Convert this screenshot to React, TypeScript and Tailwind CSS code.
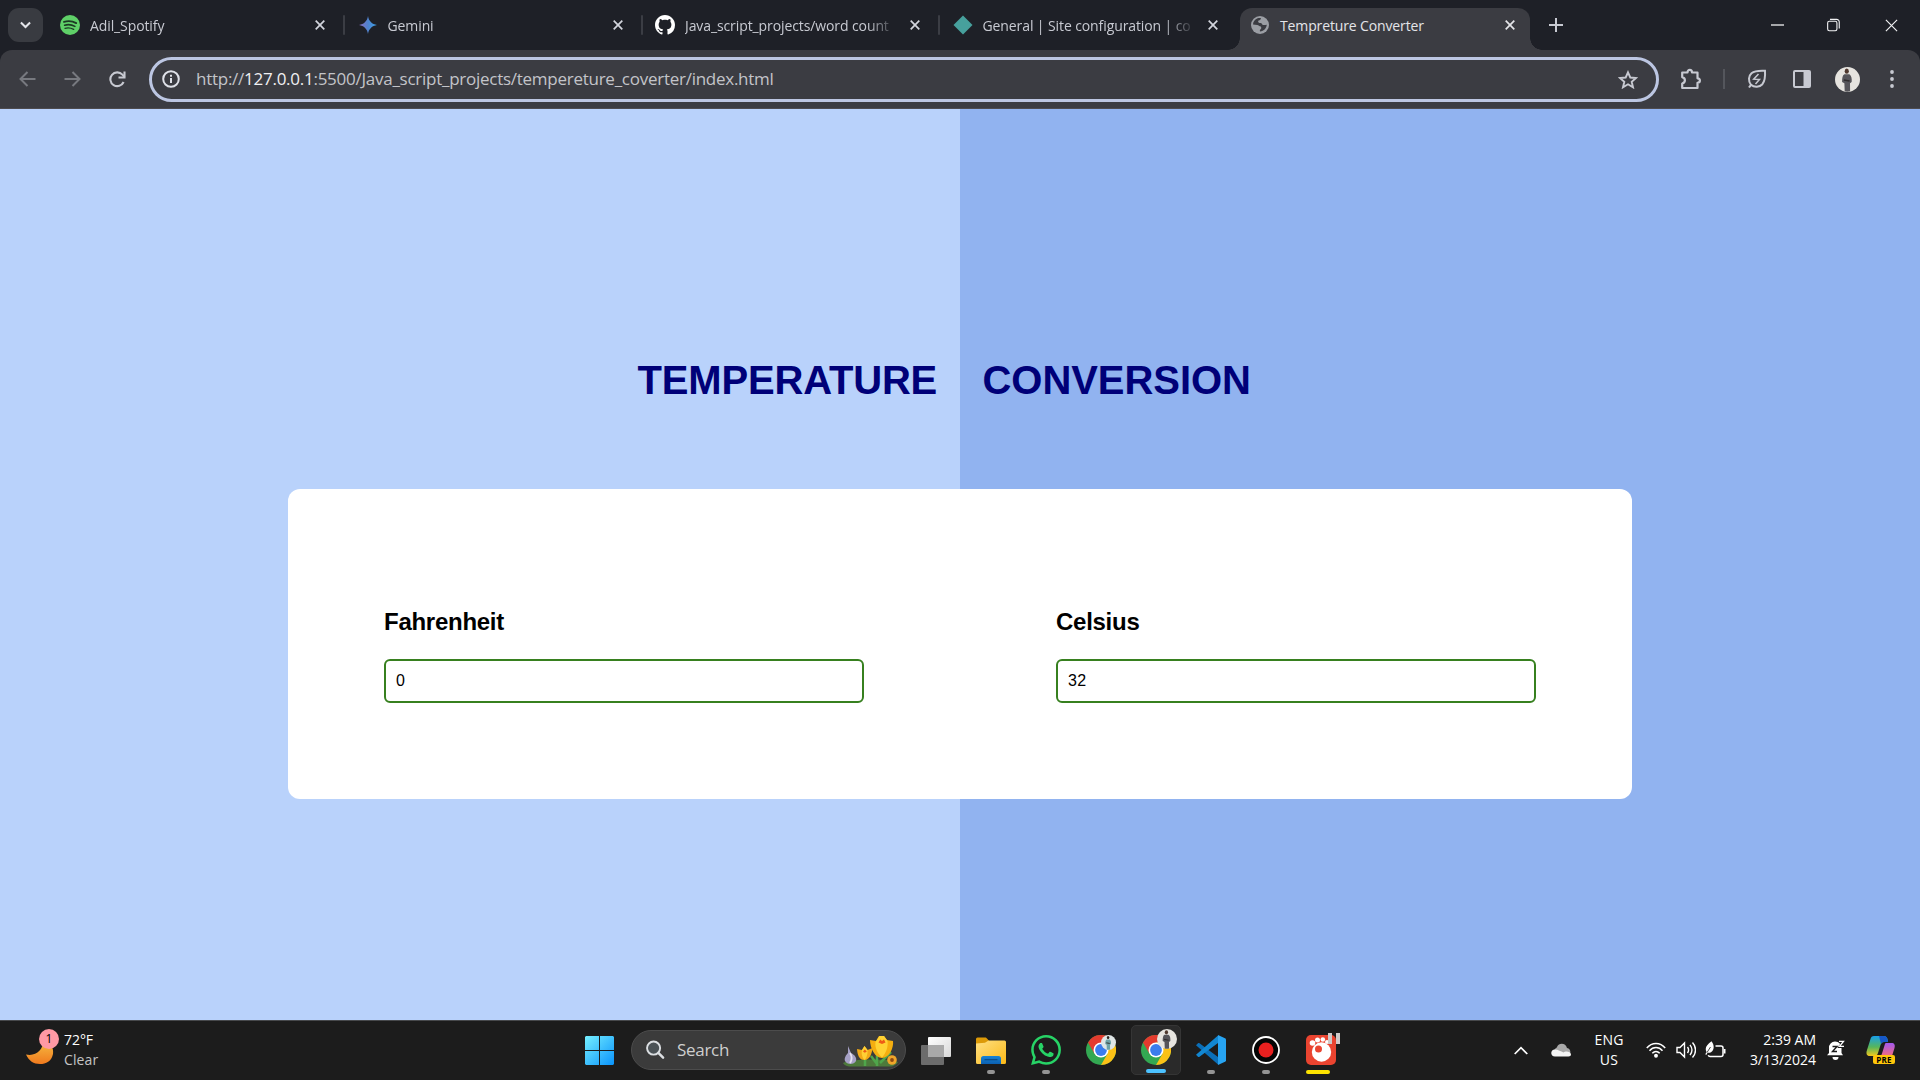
import React from "react";

const ui = "font-['Open_Sans','Noto_Sans',sans-serif]";

function X({ size = 10, w = 1.7 }: { size?: number; w?: number }) {
  return (
    <svg width={size} height={size} viewBox="0 0 10 10" fill="none" stroke="currentColor" strokeWidth={w} className="shrink-0">
      <path d="M.7.7 9.3 9.3M9.3.7.7 9.3" />
    </svg>
  );
}

const Spotify = () => (
  <svg width="20" height="20" viewBox="0 0 20 20">
    <circle cx="10" cy="10" r="10" fill="#5fd068" />
    <g fill="none" stroke="#1d3a24" strokeLinecap="round">
      <path d="M4 6.9c4-1.2 8.600-.8 12.200 1.200" strokeWidth="1.900" />
      <path d="M4.600 10.200c3.400-1 7.200-.6 10.300 1.200" strokeWidth="1.600" />
      <path d="M5 13.300c3-.8 6-.4 8.700 1.100" strokeWidth="1.300" />
    </g>
  </svg>
);

const Gemini = () => (
  <svg width="18" height="18" viewBox="0 0 18 18">
    <defs>
      <linearGradient id="gem" x1="0" y1="0" x2="1" y2="0">
        <stop offset="0" stopColor="#8a6fc0" />
        <stop offset=".5" stopColor="#4f83cf" />
        <stop offset="1" stopColor="#3aa0e8" />
      </linearGradient>
    </defs>
    <path fill="url(#gem)" d="M9 0c.7 5 4 8.300 9 9-5 .7-8.300 4-9 9-.7-5-4-8.300-9-9 5-.7 8.300-4 9-9z" />
  </svg>
);

const Github = () => (
  <svg width="20" height="20" viewBox="0 0 16 16" fill="#fff">
    <path d="M8 0C3.580 0 0 3.580 0 8c0 3.540 2.290 6.530 5.470 7.590.4.070.55-.17.55-.38 0-.19-.01-.82-.01-1.490-2.010.37-2.530-.49-2.690-.94-.09-.23-.48-.94-.82-1.130-.28-.15-.68-.52-.01-.53.63-.01 1.080.58 1.230.82.720 1.210 1.870.87 2.330.66.070-.52.280-.87.510-1.070-1.780-.2-3.640-.89-3.640-3.950 0-.87.310-1.590.820-2.150-.08-.2-.36-1.020.080-2.120 0 0 .670-.21 2.200.820.640-.18 1.320-.27 2-.27s1.360.090 2 .27c1.530-1.040 2.200-.82 2.200-.82.440 1.100.160 1.920.080 2.120.510.560.820 1.270.820 2.150 0 3.070-1.870 3.750-3.650 3.950.290.250.540.730.540 1.480 0 1.070-.01 1.930-.01 2.200 0 .210.150.460.550.380A8.010 8.010 0 0 0 16 8c0-4.420-3.580-8-8-8z" />
  </svg>
);

const Diamond = () => (
  <svg width="20" height="20" viewBox="0 0 20 20">
    <path d="M10 .5 19.500 10 10 19.500.5 10z" fill="#47a09d" />
  </svg>
);

const Globe = () => (
  <svg width="18" height="18" viewBox="0 0 18 18" className="shrink-0">
    <circle cx="9" cy="9" r="9" fill="#9b9ea4" />
    <path
      fill="#3b3c42"
      d="M10 2.200c-.2 1.300-1 1.900-2.300 2.200-.7.200-.6 1-.4 1.700.3 1 1.300.9 2.300.9 1.300 0 1.300 1.400 2.300 1.900.8.400 2.100.2 3.900-.2-.2 2.500-1.700 4.900-4.100 6.100-.9.400-1.700.7-2.700.8-.3-1.400-.2-2.200 1-2.700.4-.9.300-1.700-.2-2.300-1.400-.3-2.300-1.300-3.500-1.500C4.700 8.800 3.400 8.800 2 8.600c0-2.900 2-5.400 4.600-6.300 1-.3 2.300-.4 3.400-.1z"
    />
  </svg>
);

const tabs = [
  { icon: <Spotify />, title: "Adil_Spotify" },
  { icon: <Gemini />, title: "Gemini" },
  { icon: <Github />, title: "Java_script_projects/word count" },
  { icon: <Diamond />, title: "General | Site configuration | co" },
];

function TabBar() {
  return (
    <div className="flex h-[50px] shrink-0 items-center bg-[#1e2027] text-[#c8cad2]">
      <div className="ml-2 flex h-[34px] w-[35px] shrink-0 items-center justify-center rounded-[11px] bg-[#393b41]">
        <svg width="11" height="8" viewBox="0 0 12 8" fill="none" stroke="#e4e5ea" strokeWidth="2.200">
          <path d="M1 1.200 6 6.200l5-5" />
        </svg>
      </div>
      {tabs.map((t, i) => (
        <div key={t.title} className="flex h-full w-[297.500px] shrink-0 items-center pl-[17px]">
          <div className="flex w-5 shrink-0 justify-center">{t.icon}</div>
          <div className="ml-[10px] w-[210px] shrink-0 text-[14px] tracking-[-0.1px] whitespace-nowrap [mask-image:linear-gradient(90deg,#000_182px,transparent_213px)]">
            {t.title}
          </div>
          <div className="ml-[15px] text-[#d3d5dd]">
            <X />
          </div>
          {i < 3 && <div className="ml-[18px] h-5 w-[2px] shrink-0 rounded bg-[#3b3d44]" />}
        </div>
      ))}
      <div className="relative ml-[7px] mt-2 flex h-[42px] w-[290px] shrink-0 items-center rounded-t-[12px] bg-[#3b3c42] text-[#e4e5e9]">
        <div className="absolute bottom-0 -left-3 size-3 bg-[radial-gradient(circle_at_0_0,#1e2027_11.500px,#3b3c42_12px)]" />
        <div className="absolute -right-3 bottom-0 size-3 bg-[radial-gradient(circle_at_100%_0,#1e2027_11.500px,#3b3c42_12px)]" />
        <div className="-mt-2 flex items-center pl-[11px]">
          <Globe />
          <div className="ml-[11px] w-[225px] text-[14px] tracking-[-0.13px] whitespace-nowrap">Tempreture Converter</div>
          <X />
        </div>
      </div>
      <svg className="ml-[19px]" width="14" height="14" viewBox="0 0 14 14" stroke="#c8cad2" strokeWidth="2">
        <path d="M7 0v14M0 7h14" />
      </svg>
      <div className="ml-auto flex items-center pr-[22px] text-[#f1f1f3]">
        <svg width="13" height="2" viewBox="0 0 13 2">
          <path d="M0 1h13" stroke="currentColor" strokeWidth="1.300" />
        </svg>
        <svg className="ml-[43px]" width="13" height="14" viewBox="0 0 14 14" fill="none" stroke="currentColor" strokeWidth="1.200">
          <rect x=".7" y="3" width="10" height="10.200" rx="1.800" />
          <path d="M3.200 .9h7.200a2.800 2.800 0 0 1 2.800 2.800v7" />
        </svg>
        <div className="ml-[45px]">
          <X size={13} w={0.9} />
        </div>
      </div>
    </div>
  );
}

function Avatar({ size, light = false }: { size: number; light?: boolean }) {
  return (
    <svg width={size} height={size} viewBox="0 0 24 24">
      <circle cx="12" cy="12" r="12" fill={light ? "#dfe6e6" : "#e6e4df"} />
      <ellipse cx="11.300" cy="4" rx="2" ry="2.500" fill={light ? "#2b2320" : "#50392f"} />
      <path
        d="M9 7h4.800c1.800 1 2.600 4 2.200 7.500l-1.600 1 .1 7.800c-1.800.5-3.800.5-5.200 0L9 15.500l-2.200-1c0-4 .4-6.500 2.200-7.500z"
        fill={light ? "#6fa3a8" : "#56555a"}
      />
      <path d="M8.500 12.500l5.500 1" stroke={light ? "#2b2320" : "#2f2c2d"} strokeWidth="1.400" />
    </svg>
  );
}

function Toolbar() {
  return (
    <div className="flex h-[59px] shrink-0 items-center bg-[#1e2027]">
      <div className="flex h-full w-full items-center rounded-t-[12px] border-b border-[#4e4c50] bg-[#3b3c42] text-[#c7c9d1]">
        <svg className="ml-[19px] text-[#77797f]" width="17" height="16" viewBox="0 0 17 16" fill="none" stroke="currentColor" strokeWidth="2">
          <path d="M16.500 8H2M8.500 1 1.500 8l7 7" />
        </svg>
        <svg className="ml-[28px] text-[#77797f]" width="17" height="16" viewBox="0 0 17 16" fill="none" stroke="currentColor" strokeWidth="2">
          <path d="M.5 8H15M8.500 1l7 7-7 7" />
        </svg>
        <svg className="ml-[28px]" width="17" height="17" viewBox="0 0 17 17" fill="none" stroke="currentColor" strokeWidth="2.100">
          <path d="M14.600 11a6.900 6.900 0 1 1-1.200-7.400L15.500 6" />
          <path d="M15.500 .5v6h-6" />
        </svg>
        <div className="ml-[23px] flex h-[45px] w-[1510px] items-center rounded-full border-[3px] border-[#bcc6e2] pl-[10px]">
          <svg width="18" height="18" viewBox="0 0 18 18" fill="none" stroke="#dfe1e8" strokeWidth="2">
            <circle cx="9" cy="9" r="7.800" />
            <path d="M9 8v5M9 4.700v2" />
          </svg>
          <div className="ml-4 text-[17px] tracking-[-0.26px] text-[#c3c4c9]">
            http://<span className="text-[#f0f0f2]">127.0.0.1</span>:5500/Java_script_projects/tempereture_coverter/index.html
          </div>
          <svg className="mr-[18px] ml-auto" width="20" height="19" viewBox="0 0 20 19" fill="none" stroke="currentColor" strokeWidth="1.900">
            <path d="m10 2.300 2.300 5.200 5.700.5-4.300 3.800 1.300 5.500-5-3-5 3 1.300-5.500L2 8l5.700-.5z" />
          </svg>
        </div>
        <svg className="ml-[21px]" width="22" height="22" viewBox="0 0 22 22">
          <path
            d="M2.200 4.500h5.300c0-3.400 4.500-3.400 4.500 0h5.500v5.800c3.200.2 3.200 4.300 0 4.500V20H2.200v-4.500c3.600-1 3.600-5.400 0-6.400z"
            fill="none"
            stroke="currentColor"
            strokeWidth="2.200"
            strokeLinejoin="round"
          />
        </svg>
        <div className="ml-[21px] h-5 w-[2px] bg-[#54565c]" />
        <svg className="ml-[22px]" width="20" height="20" viewBox="0 0 20 20" fill="none" stroke="currentColor" strokeWidth="2">
          <path d="M2 18.500c1-1.500 1.500-2 2-2.700C1 12 1.500 7 4.500 4.300 8 1.500 13 1.500 18 1.800c.3 5 .2 10-2.600 13.400-2.800 3-8 3.500-11.400.6" />
          <path d="m11.500 5-4.800 5.200 5.800.3L8.500 15" strokeWidth="1.500" />
        </svg>
        <svg className="ml-[26px]" width="18" height="18" viewBox="0 0 18 18">
          <rect x="1" y="1" width="16" height="16" rx="1" fill="none" stroke="currentColor" strokeWidth="2" />
          <path d="M10.500 1H17v16h-6.500z" fill="currentColor" />
        </svg>
        <div className="ml-[24px]">
          <Avatar size={25} />
        </div>
        <svg className="ml-[30px]" width="4" height="18" viewBox="0 0 4 18" fill="currentColor">
          <circle cx="2" cy="2" r="1.900" />
          <circle cx="2" cy="9" r="1.900" />
          <circle cx="2" cy="16" r="1.900" />
        </svg>
      </div>
    </div>
  );
}

function Field({ label, value }: { label: string; value: string }) {
  return (
    <div className="w-[480px]">
      <div className="text-[24px] leading-[28px] font-bold tracking-[-0.27px] text-black">{label}</div>
      <div className="mt-[23px] flex h-[44px] items-center rounded-[6px] border-2 border-[#37801f] pb-px pl-[10px] text-[16px] tracking-[0.4px] text-black">
        {value}
      </div>
    </div>
  );
}

function Page() {
  return (
    <div className="flex min-h-0 flex-1 flex-col items-center bg-[linear-gradient(90deg,#b9d2fb_50%,#91b3f0_50%)] font-['Liberation_Sans',Arial,sans-serif]">
      <h1 className="mt-[247px] flex w-[1344px] text-[40px] leading-[48px] font-bold text-[#000078]">
        <span className="ml-[349.500px] w-[345px] tracking-[-0.17px]">TEMPERATURE</span>
        <span className="tracking-[-0.05px]">CONVERSION</span>
      </h1>
      <div className="mt-[85px] flex h-[310px] w-[1344px] gap-[192px] rounded-[12px] bg-white px-24 pt-[119px]">
        <Field label="Fahrenheit" value="0" />
        <Field label="Celsius" value="32" />
      </div>
    </div>
  );
}

const Chrome = () => (
  <svg width="30" height="30" viewBox="0 0 30 30">
    <circle cx="15" cy="15" r="15" fill="#33a852" />
    <path d="M15 15 2 7.500A15 15 0 0 1 28 7.500H15z" fill="#e33b2e" />
    <path d="M2 7.500 8.500 18.800 15 15V7.500z" fill="#e33b2e" />
    <path d="M15 7.500h13A15 15 0 0 1 15 30l6.500-11.200z" fill="#fbc116" />
    <circle cx="15" cy="15" r="7.500" fill="#fff" />
    <circle cx="15" cy="15" r="5.900" fill="#3b7ded" />
  </svg>
);

const Folder = () => (
  <svg width="30" height="27" viewBox="0 0 30 27">
    <defs>
      <linearGradient id="fo" x1="0" y1="0" x2="1" y2="1">
        <stop offset="0" stopColor="#ffe083" />
        <stop offset="1" stopColor="#fbb917" />
      </linearGradient>
      <linearGradient id="fb" x1="0" y1="0" x2="0" y2="1">
        <stop offset="0" stopColor="#1583d6" />
        <stop offset="1" stopColor="#0c60b0" />
      </linearGradient>
    </defs>
    <path d="M0 2a1.500 1.500 0 0 1 1.500-1.500h7.500c1 0 1.500.5 2.200 1.200l2 2.300v6H0z" fill="#dd9a07" />
    <path d="M0 6.500 9 5.800l3.500-2.300h16A1.500 1.500 0 0 1 30 5v20.500a1.500 1.500 0 0 1-1.500 1.500h-27A1.500 1.500 0 0 1 0 25.500z" fill="url(#fo)" />
    <path d="M5 27v-5.500a2.500 2.500 0 0 1 2.500-2.500h15a2.500 2.500 0 0 1 2.500 2.500V27z" fill="url(#fb)" />
    <path d="M8.500 22.700h13" stroke="#0a4a86" strokeWidth="1.200" />
  </svg>
);

const Whatsapp = () => (
  <svg width="30" height="30" viewBox="0 0 24 24" fill="#27d366">
    <path d="M17.472 14.382c-.297-.149-1.758-.867-2.030-.967-.273-.099-.471-.148-.67.150-.197.297-.767.966-.94 1.164-.173.199-.347.223-.644.075-.297-.15-1.255-.463-2.390-1.475-.883-.788-1.480-1.761-1.653-2.059-.173-.297-.018-.458.130-.606.134-.133.298-.347.446-.52.149-.174.198-.298.298-.497.099-.198.050-.371-.025-.52-.075-.149-.669-1.612-.916-2.207-.242-.579-.487-.5-.669-.51-.173-.008-.371-.01-.57-.01-.198 0-.52.074-.792.372-.272.297-1.040 1.016-1.040 2.479 0 1.462 1.065 2.875 1.213 3.074.149.198 2.096 3.200 5.077 4.487.709.306 1.262.489 1.694.625.712.227 1.360.195 1.871.118.571-.085 1.758-.719 2.006-1.413.248-.694.248-1.289.173-1.413-.074-.124-.272-.198-.570-.347m-5.421 7.403h-.004a9.870 9.870 0 0 1-5.031-1.378l-.361-.214-3.741.982.998-3.648-.235-.374a9.860 9.860 0 0 1-1.510-5.260c.001-5.450 4.436-9.884 9.888-9.884 2.640 0 5.122 1.030 6.988 2.898a9.825 9.825 0 0 1 2.893 6.994c-.003 5.450-4.437 9.884-9.885 9.884m8.413-18.297A11.815 11.815 0 0 0 12.050 0C5.495 0 .160 5.335.157 11.892c0 2.096.547 4.142 1.588 5.945L.057 24l6.305-1.654a11.882 11.882 0 0 0 5.683 1.448h.005c6.554 0 11.890-5.335 11.893-11.893a11.821 11.821 0 0 0-3.480-8.413" />
  </svg>
);

const VSCode = () => (
  <svg width="30" height="30" viewBox="0 0 30 30">
    <path d="M0 10.200 2 8.200c.5-.4 1-.4 1.500 0L22 22v7.500z" fill="#0b6fb8" />
    <path d="M0 19.800l2 2c.5.400 1 .400 1.500 0L22 8V.5z" fill="#1287d2" />
    <path d="M22 0l7 3.200c.6.300 1 .8 1 1.500v20.600c0 .7-.4 1.200-1 1.500L22 30z" fill="#27a4f2" />
  </svg>
);

const Record = () => (
  <svg width="28" height="28" viewBox="0 0 28 28">
    <circle cx="14" cy="14" r="13" fill="#050505" stroke="#fff" strokeWidth="1.800" />
    <circle cx="14" cy="14" r="7.500" fill="#e8201f" />
  </svg>
);

const Gom = () => (
  <svg width="34" height="33" viewBox="0 0 34 33">
    <rect y="3" width="30" height="30" rx="5" fill="#ea4430" />
    <circle cx="15.500" cy="20" r="9.700" fill="#fff" />
    <circle cx="6.500" cy="11" r="2.800" fill="#fff" />
    <circle cx="11.500" cy="8" r="2.500" fill="#fff" />
    <circle cx="16.800" cy="7.500" r="2.300" fill="#fff" />
    <circle cx="21" cy="10" r="2" fill="#fff" />
    <circle cx="12.500" cy="17" r="3.500" fill="#ea4430" />
    <path d="M22 1h4v11h-4zM30 1h4v11h-4z" fill="#cfc9c8" />
  </svg>
);

const Flowers = () => (
  <svg width="56" height="33" viewBox="0 0 56 33">
    <path d="M0 29c6-4 44-5 55-1-1 2-4 4-6 4.500H6C3 32 1 31 0 29z" fill="#4d7a3b" />
    <path d="M34 32V20M22 32v-8M28 22l6 8M48 18l-11 11" stroke="#4fa64b" strokeWidth="2.500" fill="none" />
    <path d="M5 12l3 7c4 2 6 5 5 8-2 4-9 4-11 0-1-3 1-6 3-8z" fill="#a6a1c6" />
    <path d="M7 19c2 3 2 7 0 10" stroke="#e4e0ef" strokeWidth="1.800" fill="none" />
    <path d="M14 15l5 1 2.500-4 3 4 5-2c-.5 5-2.500 12-8 12s-7-5-7.500-11z" fill="#f2a916" />
    <path d="M19 16l2.500-4 3 4c.5 4-1 8-3 10-2-2-3.500-6-2.500-10z" fill="#ffd035" />
    <path d="M27 6l6 1 3-5 5 0 3 4 6 1c1 7-4 17-11 17S27 14 27 6z" fill="#f5ae10" />
    <path d="M32.500 8l4-6h4.500l3.500 5c1 6-2 13-5.500 16.500C35 20 31.500 14 32.500 8z" fill="#ffd233" />
    <path d="M35.500 8.500l1.800-3 1.700 1.500 2-1.500 1.500 3-3.500 1.500z" fill="#ef5b16" />
    <path d="M20 17.500l1.800-2 2 2-2 1.300z" fill="#ef5b16" />
    <circle cx="49" cy="26" r="4.800" fill="#f0a52a" />
    <circle cx="49" cy="26" r="1.900" fill="#8f4a12" />
  </svg>
);

function TaskApp({ children, mark = "", active = false }: { children: React.ReactNode; mark?: string; active?: boolean }) {
  return (
    <div className={`relative flex h-[50px] w-[50px] items-center justify-center rounded-[5px] ${active ? "border border-[#353535] bg-[#2a2a2a]" : ""}`}>
      {children}
      {mark && <div className={`absolute bottom-[1px] h-1 rounded-full ${mark}`} />}
    </div>
  );
}

function Taskbar() {
  const dot = "w-2 bg-[#949494]";
  return (
    <div className="flex h-[60px] shrink-0 items-center border-t border-[#47494c] bg-[#1c1c1c] text-white">
      <div className="flex w-[585px] items-center pl-[26px]">
        <div className="relative -mt-[8px] h-[36px] w-[33px]">
          <svg className="mt-[5px]" width="28" height="31" viewBox="0 0 28 31">
            <defs>
              <linearGradient id="mo" x1="0" y1="0" x2="0" y2="1">
                <stop offset="0" stopColor="#f6c044" />
                <stop offset="1" stopColor="#f07a1e" />
              </linearGradient>
            </defs>
            <path d="M0 20.500c10 2 17-4 17.500-14.500 7 2 10.500 8 9.500 14-1.500 7.500-7 10-13 10-6.500 0-11-3-14-9.500z" fill="url(#mo)" />
          </svg>
          <div className="absolute top-0 left-[13px] flex size-5 items-center justify-center rounded-full bg-[#ff99a4] text-[12px] text-black">1</div>
        </div>
        <div className="-mt-[2px] ml-[5px] text-[14px] leading-[20px]">
          <div className="tracking-[-0.05px]">72°F</div>
          <div className="tracking-[0.1px] text-[#c4c4c4]">Clear</div>
        </div>
      </div>
      <svg width="29" height="29" viewBox="0 0 29 29">
        <defs>
          <linearGradient id="wi" x1="0" y1="0" x2="1" y2="1">
            <stop offset="0" stopColor="#75efff" />
            <stop offset="1" stopColor="#0a93fb" />
          </linearGradient>
        </defs>
        <path fill="url(#wi)" d="M1 0h13v14H0V1zM15 0h13l1 1v13H15zM0 15h14v14H1l-1-1zM15 15h14v13l-1 1H15z" />
      </svg>
      <div className="-mt-px ml-[17px] flex h-10 w-[275px] items-center rounded-full border border-[#4c4c4c] bg-[#3b3b3b] pl-[14px]">
        <svg width="19" height="20" viewBox="0 0 20 20" fill="none" stroke="#dcdfe2" strokeWidth="2">
          <circle cx="8" cy="8" r="6.900" fill="#4b5256" />
          <path d="m13 13 5 5" strokeWidth="2.600" strokeLinecap="round" />
        </svg>
        <div className="ml-[12px] text-[17px] tracking-[-0.3px] text-[#cfcfcf]">Search</div>
        <div className="mr-[6px] ml-auto">
          <Flowers />
        </div>
      </div>
      <svg className="ml-[15px]" width="30" height="28" viewBox="0 0 30 28">
        <defs>
          <linearGradient id="tv" x1="0" y1="0" x2="1" y2="1">
            <stop offset="0" stopColor="#fff" />
            <stop offset="1" stopColor="#d8d8d8" />
          </linearGradient>
        </defs>
        <rect x="7" width="23" height="20" rx="1" fill="url(#tv)" />
        <rect y="8" width="23" height="20" rx="1" fill="#6c6c6c" />
        <rect x="7" y="8" width="16" height="12" fill="#a9a9a9" />
      </svg>
      <div className="-mt-px ml-[15px] flex gap-[5px]">
        <TaskApp mark={dot}><Folder /></TaskApp>
        <TaskApp mark={dot}><Whatsapp /></TaskApp>
        <TaskApp>
          <Chrome />
          <div className="absolute top-[10px] left-[25px]"><Avatar size={15} light /></div>
        </TaskApp>
        <TaskApp mark="w-5 bg-[#4cc2ff]" active>
          <Chrome />
          <div className="absolute top-[3px] left-[25px]"><Avatar size={20} /></div>
        </TaskApp>
        <TaskApp mark={dot}><VSCode /></TaskApp>
        <TaskApp mark={dot}><Record /></TaskApp>
        <TaskApp mark="left-[10px] w-6 bg-[#fde300]">
          <div className="-mt-[3px] ml-[4px]"><Gom /></div>
        </TaskApp>
      </div>
      <div className="-mt-px ml-auto flex items-center pr-[24px]">
        <svg width="14" height="9" viewBox="0 0 14 9" fill="none" stroke="#fff" strokeWidth="1.700">
          <path d="m.7 8 6.300-6.300L13.300 8" />
        </svg>
        <svg className="ml-[23px]" width="20" height="14" viewBox="0 0 20 14">
          <path d="M3 9C3 5 6 5 6 4c2-5 9-4 10 1 5 1 4 8 0 8H4z" fill="#a8a8a8" />
          <path d="M4 13.500c-5 0-5-7 0-7 3 0 6 2 8.500 3 2-2 7.500-1 7.500 2 0 1-1 2-2.500 2z" fill="#f4f4f4" />
        </svg>
        <div className="ml-[23px] w-[30px] text-center text-[14px] leading-[20px] tracking-[0.2px]">
          <div className="-mx-2">ENG</div>
          <div>US</div>
        </div>
        <svg className="ml-[22px]" width="20" height="16" viewBox="0 0 20 16" fill="none" stroke="#fff" strokeWidth="1.500">
          <path d="M.8 6c5-6 13.400-6 18.400 0M3.500 8.700c3.700-4.300 9.300-4.300 13 0M6.300 11.300c2.300-2.500 5.100-2.500 7.400 0" />
          <circle cx="10" cy="13.700" r="1.200" fill="#fff" />
        </svg>
        <svg className="ml-[10px]" width="20" height="18" viewBox="0 0 20 18" fill="none" stroke="#fff" strokeWidth="1.400">
          <path d="M1 6.500h3L8.500 2v14L4 11.500H1zM11.500 6c1.300 1.800 1.300 4.200 0 6M14 3.800c2.500 3.300 2.500 7.100 0 10.400M16.500 1.500c4 4.500 4 10.500 0 15" />
        </svg>
        <svg className="ml-[9px]" width="21" height="18" viewBox="0 0 21 18">
          <path d="M10.500 5H16a2 2 0 0 1 2 2v6.500a2 2 0 0 1-2 2H5a2 2 0 0 1-1.800-1.200" fill="none" stroke="#fff" strokeWidth="1.500" />
          <path d="M18.700 8h1.800v4.500h-1.800z" fill="#fff" />
          <path d="M.3 13.200 1.500 11C-.5 7 1.500 4 6.500.3 9.500 4 9.500 9 6 11.200c-1.300.700-2.500.7-3.300.4L1.300 14z" fill="#fff" />
          <path d="M2 11.500 5.500 6" stroke="#1c1c1c" strokeWidth=".8" />
        </svg>
        <div className="ml-[16px] w-[74px] text-right text-[14px] leading-[20px] tracking-[-0.02px] whitespace-nowrap">
          <div>2:39 AM</div>
          <div className="-ml-4">3/13/2024</div>
        </div>
        <svg className="ml-[11px]" width="18" height="20" viewBox="0 0 18 20">
          <path d="M2 13V8a6 6 0 0 1 6-6.500c4 0 6.500 3 6.500 6.500v5l1.500 2.300H0z" fill="#fff" />
          <path d="M5.500 17h6a3 3 0 0 1-6 0z" fill="#fff" />
          <path d="M5.500 6.500h4.500l-4.500 5h4.500" fill="none" stroke="#1c1c1c" strokeWidth="1.400" />
          <path d="M12 1h5l-4 5.500h4.500" fill="none" stroke="#1c1c1c" strokeWidth="2.800" />
          <path d="M12 1.300h4.500l-4 5h4.500" fill="none" stroke="#fff" strokeWidth="1.300" />
        </svg>
        <div className="relative ml-[21px] h-[30px] w-[30px]">
          <svg width="30" height="30" viewBox="0 0 30 30">
            <defs>
              <linearGradient id="ca" x1="0" y1="0" x2="0" y2="1">
                <stop offset="0" stopColor="#18a0ea" />
                <stop offset=".55" stopColor="#56b65b" />
                <stop offset="1" stopColor="#f3c81d" />
              </linearGradient>
              <linearGradient id="cb" x1="0" y1="0" x2="0" y2="1">
                <stop offset="0" stopColor="#a259f0" />
                <stop offset="1" stopColor="#f36a7f" />
              </linearGradient>
            </defs>
            <path d="M8 1h10c2 0 3 1.500 3.500 3L22 7h-4c-2 0-3 1.500-3.500 3L12 18c-.6 2-1.500 3-3.500 3H4c-3 0-4-2-3.300-5L4.500 4C5 2 6 1 8 1z" fill="url(#ca)" />
            <path d="M13 1h5c2 0 3 1.500 3.500 3L22 7h-4c-1.500 0-2.500.7-3 2z" fill="#1658c8" />
            <path d="M20 8h5.500c3 0 3.800 2 3 5l-2.500 8H13.500c1.500 0 2-1 2.500-2.500l2.500-8C19 9 19 8 20 8z" fill="url(#cb)" />
          </svg>
          <div className="absolute top-[20px] left-[7px] flex h-[9px] w-[22px] items-center justify-center rounded-[2px] bg-[#ffc60a] text-[8px] leading-none font-bold tracking-[0.3px] text-black">
            PRE
          </div>
        </div>
      </div>
    </div>
  );
}

export default function App() {
  return (
    <div className={`flex h-[1080px] w-[1920px] flex-col overflow-hidden ${ui}`}>
      <TabBar />
      <Toolbar />
      <div className="flex min-h-0 flex-1">
        <Page />
      </div>
      <Taskbar />
    </div>
  );
}
